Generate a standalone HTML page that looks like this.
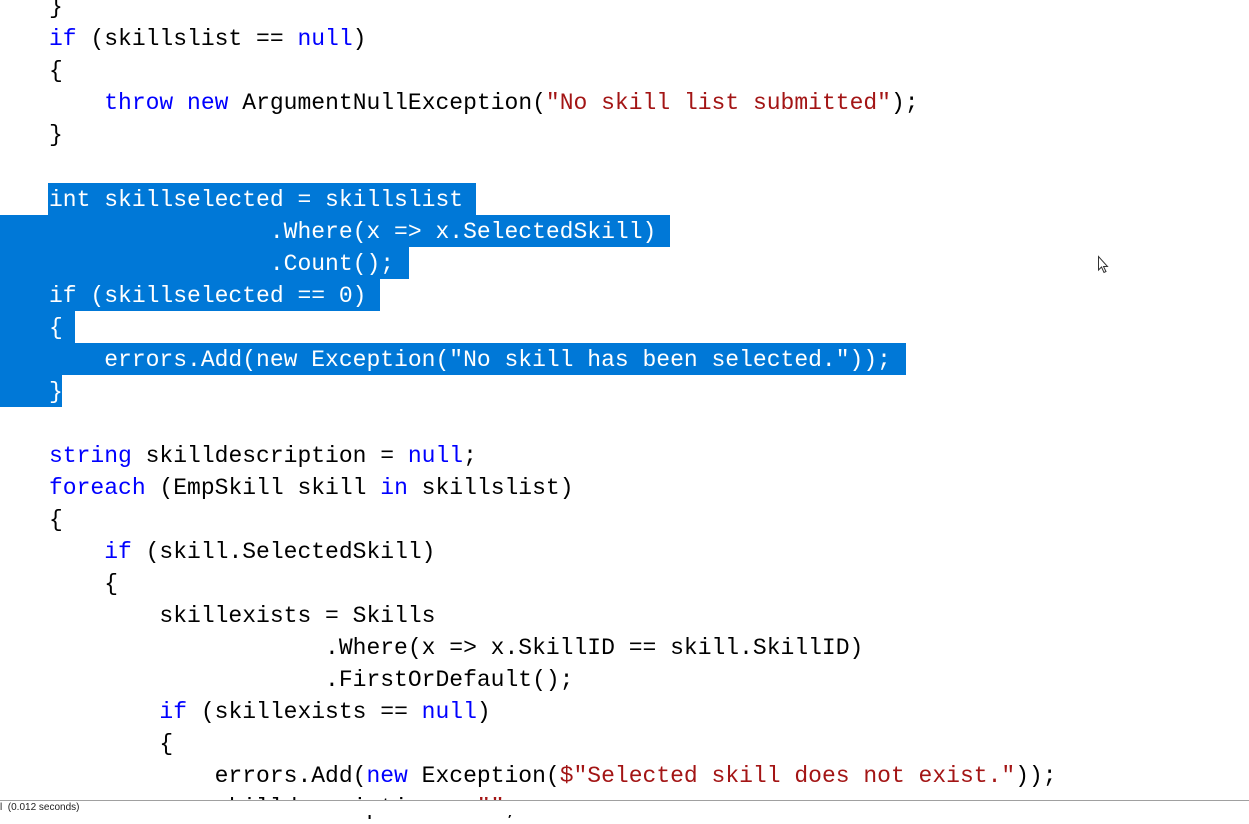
<!DOCTYPE html>
<html><head><meta charset="utf-8"><style>
html,body{margin:0;padding:0;}
body{width:1249px;height:814px;background:#fff;position:relative;overflow:hidden;font-family:"Liberation Mono",monospace;}
.l{position:absolute;left:49px;height:32px;line-height:32px;font-size:23px;white-space:pre;color:#000;margin-top:1px;}
.k{color:#0000ff}.s{color:#a31515}
.sel{color:#fff}
.h{position:absolute;background:#0078d7;height:32px;}
.bar{position:absolute;left:0;top:800px;width:1249px;height:14px;background:#fff;border-top:1px solid #a0a0a0;font-family:"Liberation Sans",sans-serif;font-size:10px;line-height:13px;color:#222;z-index:5;}
</style></head><body>
<div class="h" style="left:48px;top:183px;width:428px"></div>
<div class="h" style="left:0;top:215px;width:670px"></div>
<div class="h" style="left:0;top:247px;width:409px"></div>
<div class="h" style="left:0;top:279px;width:380px"></div>
<div class="h" style="left:0;top:311px;width:75px"></div>
<div class="h" style="left:0;top:343px;width:906px"></div>
<div class="h" style="left:0;top:375px;width:62px"></div>

<div class="l" style="top:-10px">}</div>
<div class="l" style="top:22px"><span class="k">if</span> (skillslist == <span class="k">null</span>)</div>
<div class="l" style="top:54px">{</div>
<div class="l" style="top:86px">    <span class="k">throw</span> <span class="k">new</span> ArgumentNullException(<span class="s">"No skill list submitted"</span>);</div>
<div class="l" style="top:118px">}</div>
<div class="l sel" style="top:183px">int skillselected = skillslist</div>
<div class="l sel" style="top:215px">                .Where(x =&gt; x.SelectedSkill)</div>
<div class="l sel" style="top:247px">                .Count();</div>
<div class="l sel" style="top:279px">if (skillselected == 0)</div>
<div class="l sel" style="top:311px">{</div>
<div class="l sel" style="top:343px">    errors.Add(new Exception("No skill has been selected."));</div>
<div class="l sel" style="top:375px">}</div>
<div class="l" style="top:439px"><span class="k">string</span> skilldescription = <span class="k">null</span>;</div>
<div class="l" style="top:471px"><span class="k">foreach</span> (EmpSkill skill <span class="k">in</span> skillslist)</div>
<div class="l" style="top:503px">{</div>
<div class="l" style="top:535px">    <span class="k">if</span> (skill.SelectedSkill)</div>
<div class="l" style="top:567px">    {</div>
<div class="l" style="top:599px">        skillexists = Skills</div>
<div class="l" style="top:631px">                    .Where(x =&gt; x.SkillID == skill.SkillID)</div>
<div class="l" style="top:663px">                    .FirstOrDefault();</div>
<div class="l" style="top:695px">        <span class="k">if</span> (skillexists == <span class="k">null</span>)</div>
<div class="l" style="top:727px">        {</div>
<div class="l" style="top:759px">            errors.Add(<span class="k">new</span> Exception(<span class="s">$"Selected skill does not exist."</span>));</div>
<div class="l" style="top:791px">            skilldescription = <span class="s">""</span>;</div>
<svg style="position:absolute;left:1097px;top:255px" width="14" height="20" viewBox="0 0 14 20"><path d="M1.5 1.5 L1.5 15 L4.5 12 L7 17.5 L9 16.5 L6.5 11.5 L10.5 11.5 Z" fill="#fff" stroke="#333" stroke-width="1"/></svg>
<div class="bar">l&nbsp; (0.012 seconds)</div>
</body></html>
